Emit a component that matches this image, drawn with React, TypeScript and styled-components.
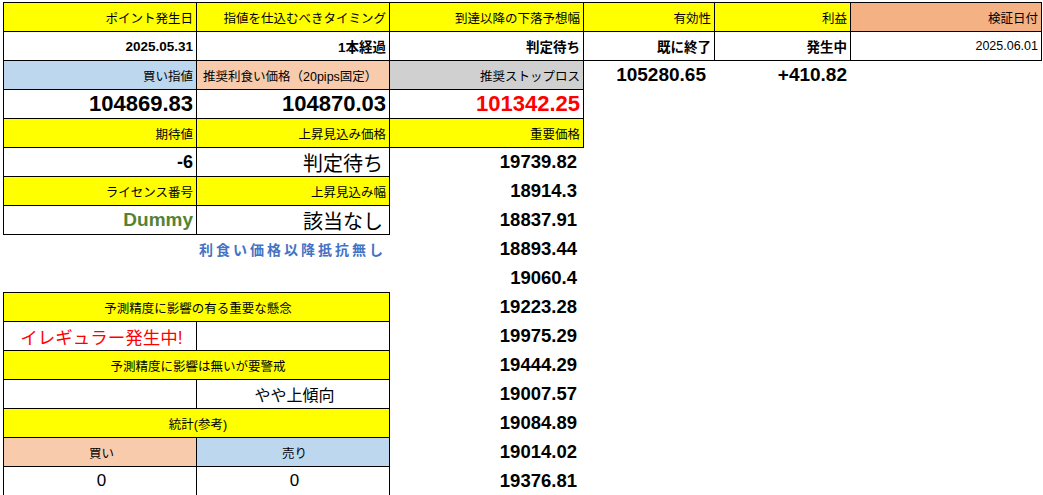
import styled, { createGlobalStyle } from 'styled-components'

const Global = createGlobalStyle`
  html, body { margin: 0; background: #fff; }
  body { font-family: "Liberation Sans", "Noto Sans CJK JP", sans-serif; color: #000; }
`

type Align = 'left' | 'center' | 'right'

interface CellSpec {
  text?: string
  span?: number
  bg?: string
  line?: boolean
  align?: Align
  size?: number
  bold?: boolean
  color?: string
  pr?: number
  ls?: number
}

const Y = '#ffff00'
const SALMON = '#f8cbad'
const BLUE = '#bdd7ee'
const head = (text: string, bg = Y, align: Align = 'right'): CellSpec => ({ text, bg, line: true, align, size: 12.5 })
const val = (text: string, size = 13.5, extra: Partial<CellSpec> = {}): CellSpec => ({ text, line: true, align: 'right', size, bold: true, ...extra })
const key = (text: string): CellSpec => ({ text, align: 'right', size: 18.5, bold: true, pr: 6 })
const none: CellSpec = {}

const rows: CellSpec[][] = [
  [head('ポイント発生日'), head('指値を仕込むべきタイミング'), head('到達以降の下落予想幅'), head('有効性'), head('利益'), head('検証日付', '#f4b183')],
  [val('2025.05.31'), val('1本経過'), val('判定待ち'), val('既に終了'), val('発生中'), val('2025.06.01', 12.5, { bold: false })],
  [head('買い指値', BLUE), head('推奨利食い価格（20pips固定）', SALMON, 'left'), head('推奨ストップロス', '#d0d0d0'), { text: '105280.65', align: 'right', size: 19, bold: true, pr: 8 }, { text: '+410.82', align: 'right', size: 19, bold: true }, none],
  [val('104869.83', 22), val('104870.03', 22), val('101342.25', 22, { color: '#ff0000' }), none, none, none],
  [head('期待値'), head('上昇見込み価格'), head('重要価格'), none, none, none],
  [val('-6', 18), { text: '判定待ち', line: true, align: 'right', size: 20, pr: 6 }, key('19739.82'), none, none, none],
  [head('ライセンス番号'), head('上昇見込み幅'), key('18914.3'), none, none, none],
  [val('Dummy', 19, { color: '#548235' }), { text: '該当なし', line: true, align: 'right', size: 20, pr: 6 }, key('18837.91'), none, none, none],
  [{ text: '利食い価格以降抵抗無し', span: 2, align: 'right', size: 14, bold: true, color: '#4472c4', ls: 3, pr: 3 }, key('18893.44'), none, none, none],
  [{ span: 2 }, key('19060.4'), none, none, none],
  [{ ...head('予測精度に影響の有る重要な懸念', Y, 'center'), span: 2 }, key('19223.28'), none, none, none],
  [{ text: 'イレギュラー発生中!', line: true, align: 'center', size: 17.5, color: '#ff0000' }, { line: true }, key('19975.29'), none, none, none],
  [{ ...head('予測精度に影響は無いが要警戒', Y, 'center'), span: 2 }, key('19444.29'), none, none, none],
  [{ line: true }, { text: 'やや上傾向', line: true, align: 'center', size: 16 }, key('19007.57'), none, none, none],
  [{ ...head('統計(参考)', Y, 'center'), span: 2 }, key('19084.89'), none, none, none],
  [head('買い', SALMON, 'center'), head('売り', BLUE, 'center'), key('19014.02'), none, none, none],
  [{ text: '0', line: true, align: 'center', size: 17 }, { text: '0', line: true, align: 'center', size: 17 }, key('19376.81'), none, none, none],
]

const Sheet = styled.div`
  display: grid;
  grid-template-columns: 193px 193px 194px 131px 136px 191px;
  grid-auto-rows: 29px;
  padding: 2px 0 0 3px;
`

const Cell = styled.div<{ $span: number; $bg: string; $line: boolean; $align: Align; $size: number; $bold: boolean; $color: string; $pr: number; $ls: number }>`
  grid-column: span ${p => p.$span};
  background: ${p => p.$bg};
  border: ${p => (p.$line ? '1px solid #000' : '1px solid transparent')};
  margin: 0 -1px -1px 0;
  display: flex;
  align-items: center;
  justify-content: ${p => (p.$align === 'left' ? 'flex-start' : p.$align === 'center' ? 'center' : 'flex-end')};
  padding: 0 ${p => p.$pr}px 0 6px;
  font-size: ${p => p.$size}px;
  font-weight: ${p => (p.$bold ? 700 : 400)};
  color: ${p => p.$color};
  letter-spacing: ${p => p.$ls}px;
  white-space: nowrap;
  overflow: hidden;
  position: relative;
  z-index: ${p => (p.$line ? 1 : 0)};
`

export default function App() {
  return (
    <>
      <Global />
      <Sheet>
        {rows.flatMap((row, r) =>
          row.map((c, i) => (
            <Cell
              key={`${r}-${i}`}
              $span={c.span ?? 1}
              $bg={c.bg ?? 'transparent'}
              $line={!!c.line}
              $align={c.align ?? 'right'}
              $size={c.size ?? 12}
              $bold={!!c.bold}
              $color={c.color ?? '#000'}
              $pr={c.pr ?? 3}
              $ls={c.ls ?? 0}
            >
              {c.text}
            </Cell>
          ))
        )}
      </Sheet>
    </>
  )
}
